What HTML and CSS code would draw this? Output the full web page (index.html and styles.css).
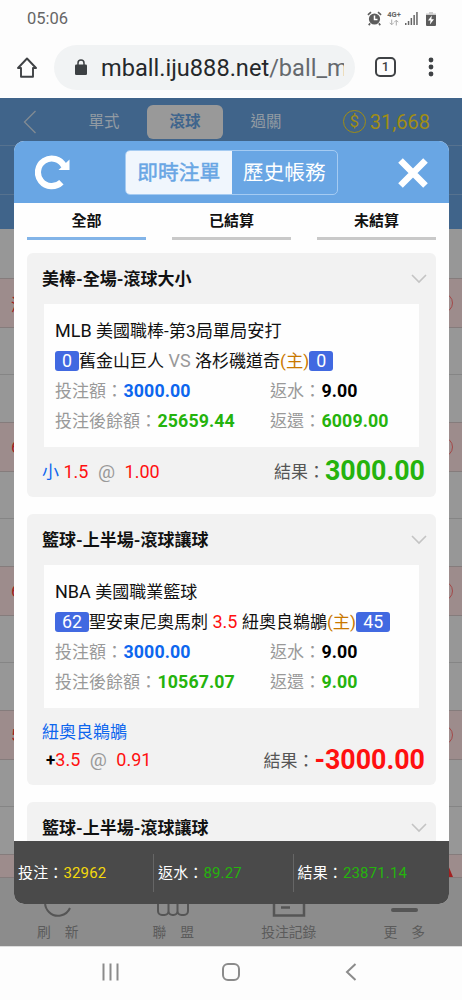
FILE: index.html
```html
<!DOCTYPE html>
<html lang="zh-TW">
<head>
<meta charset="utf-8">
<meta name="viewport" content="width=device-width">
<title>即時注單</title>
<link rel="stylesheet" href="styles.css">
</head>
<body>
<div class="phone">
  <header class="status">
    <span class="clock">05:06</span>
    <div class="status-icons">
      <svg class="alarm" width="15" height="15" viewBox="0 0 15 15" fill="none" stroke="#5c5c5c"><circle cx="7.5" cy="8" r="5.600" fill="#5c5c5c" stroke="none"/><path d="M7.500 4.500v4h3" stroke="#fff" stroke-width="1.500"/><path d="M.9 3.900 4 1.200M14.100 3.900 11 1.200M3.200 12.400l-1.500 1.700M11.800 12.400l1.500 1.700" stroke-width="1.600"/></svg>
      <div class="net"><span class="net-type">4G+</span>
        <svg width="10" height="7" viewBox="0 0 10 7" fill="none" stroke="#aaa"><path d="M2.700.5v5M.7 3.800l2 2 2-2M7.300 6.500v-5M5.300 3.200l2-2 2 2"/></svg>
      </div>
      <svg class="signal" width="13" height="13" viewBox="0 0 13 13" fill="#666"><path d="M0 11h1.500v2H0zM2.800 9h1.500v4H2.800zM5.600 6h1.500v7H5.600zM8.400 3h1.500v10H8.400zM11.200 0h1.500v13h-1.500z"/></svg>
      <svg class="battery" width="10" height="14" viewBox="0 0 10 14"><path fill="#ccc" d="M3 0h4v1.500h3v3H0v-3h3z"/><path fill="#5c5c5c" d="M0 3h10v10a1 1 0 0 1-1 1H1a1 1 0 0 1-1-1z"/><path fill="#fff" d="M5.800 3.500 2 8.500h2.500l-.6 4L8 7.300H5.400z"/></svg>
    </div>
  </header>
  <div class="browser">
    <svg class="home" width="20" height="21" viewBox="0 0 20 21" fill="none" stroke="#3f4245" stroke-width="1.900" stroke-linejoin="round"><path d="M1 11 10 1.500 19 11h-3v8.800H4V11z"/></svg>
    <div class="url">
      <svg width="12" height="16" viewBox="0 0 12 16"><rect y="5.500" width="12" height="10.500" rx="1.300" fill="#3c4043"/><path d="M3 6V3.900a3 3 0 0 1 6 0V6" fill="none" stroke="#3c4043" stroke-width="1.500"/></svg>
      <div class="address">mball.iju888.net<span class="path">/ball_m</span></div>
    </div>
    <div class="tab-count">1</div>
    <svg class="dots" width="6" height="20" viewBox="0 0 6 20" fill="#3f4245"><circle cx="3" cy="3" r="2.400"/><circle cx="3" cy="10" r="2.400"/><circle cx="3" cy="17" r="2.400"/></svg>
  </div>

  <main class="app">
    <div class="top">
      <svg class="back" width="14" height="24" viewBox="0 0 14 24" fill="none" stroke="#828b93" stroke-width="1.300"><path d="M12.500 1 1.500 12l11 11"/></svg>
      <span class="mode">單式</span>
      <span class="mode mode-on">滾球</span>
      <span class="mode">過關</span>
      <div class="balance"><span class="coin">$</span>31,668</div>
    </div>
    <div class="bar"></div>
    <div class="bar bar-last"></div>
    <div class="rows">
      <div class="gray first"></div>
      <div class="pink"><span>滾</span><i></i></div><div class="gray split"></div><div class="gray"></div>
      <div class="pink"><span>6</span><i></i></div><div class="gray split"></div><div class="gray"></div>
      <div class="pink"><span>6</span><i></i></div><div class="gray split"></div><div class="gray"></div>
      <div class="pink"><span>5</span><i></i></div><div class="gray split"></div><div class="gray"></div>
      <div class="pink cut"><svg width="9" height="12" viewBox="0 0 9 12"><path d="M0 0h4l5 12H0z" fill="#a32020"/></svg></div>
    </div>
    <nav class="menu">
      <div class="menu-item"><svg width="30" height="30" viewBox="0 0 30 30" fill="none" stroke="#555" stroke-width="2"><path d="M27 21A13 13 0 1 1 28 14"/></svg>刷　新</div>
      <div class="menu-item"><svg width="34" height="30" viewBox="0 0 34 30" fill="none" stroke="#555" stroke-width="2"><path d="M2 0v24a4 4 0 0 0 4 4h2.500a4 4 0 0 0 4-4V0v24a4 4 0 0 0 4 4h1a4 4 0 0 0 4-4V0v24a4 4 0 0 0 4 4H28a4 4 0 0 0 4-4V0"/></svg>聯　盟</div>
      <div class="menu-item"><svg width="34" height="32" viewBox="0 0 34 32" fill="none" stroke="#555" stroke-width="2.500"><path d="M2 0v30.500h30V0M9 22.500h9"/></svg>投注記錄</div>
      <div class="menu-item"><svg width="30" height="30" viewBox="0 0 30 30" fill="none" stroke="#555" stroke-width="4" stroke-linecap="round"><path d="M4 23h23"/></svg>更　多</div>
    </nav>

    <section class="modal">
      <div class="modal-head">
        <svg class="reload" width="36" height="36" viewBox="0 0 36 36"><path d="M26.400 27.200A13.800 13.800 0 1 1 29 11" fill="none" stroke="#fff" stroke-width="6.200"/><path d="M34.500 4.500V15H23.500z" fill="#fff"/></svg>
        <div class="segment"><span class="seg seg-on">即時注單</span><span class="seg">歷史帳務</span></div>
        <svg class="close" width="30" height="30" viewBox="0 0 30 30" stroke="#fff" stroke-width="6.500"><path d="M2.500 2.500 27.500 27.500M27.500 2.500 2.500 27.500"/></svg>
      </div>
      <div class="filters"><span class="filter filter-on">全部</span><span class="filter">已結算</span><span class="filter">未結算</span></div>
      <div class="list">
        <article class="card">
          <h2 class="card-title">美棒-全場-滾球大小<svg class="chev" width="16" height="10" viewBox="0 0 16 10"><path d="m1 1 7 7 7-7"/></svg></h2>
          <div class="detail">
            <div><span class="latin">MLB </span>美國職棒-<span class="latin">第3局單局安打</span></div>
            <div class="teams"><b class="score">0</b>舊金山巨人<span class="latin muted"> VS </span>洛杉磯道奇<span class="host">(主)</span><b class="score">0</b></div>
            <div class="pair"><span>投注額：<b class="blue">3000.00</b></span><span>返水：<b class="black">9.00</b></span></div>
            <div class="pair"><span>投注後餘額：<b class="green">25659.44</b></span><span>返還：<b class="green">6009.00</b></span></div>
          </div>
          <div class="outcome"><span><span class="blue">小</span><span class="latin red"> 1.5</span><span class="at">@</span><span class="latin red">1.00</span></span><span class="result">結果：<b class="green">3000.00</b></span></div>
        </article>
        <article class="card">
          <h2 class="card-title">籃球-上半場-滾球讓球<svg class="chev" width="16" height="10" viewBox="0 0 16 10"><path d="m1 1 7 7 7-7"/></svg></h2>
          <div class="detail">
            <div><span class="latin">NBA </span>美國職業籃球</div>
            <div class="teams"><b class="score">62</b>聖安東尼奧馬刺<span class="latin red"> 3.5 </span>紐奧良鵜鶘<span class="host">(主)</span><b class="score">45</b></div>
            <div class="pair"><span>投注額：<b class="blue">3000.00</b></span><span>返水：<b class="black">9.00</b></span></div>
            <div class="pair"><span>投注後餘額：<b class="green">10567.07</b></span><span>返還：<b class="green">9.00</b></span></div>
          </div>
          <div class="pick blue">紐奧良鵜鶘</div>
          <div class="outcome signed"><span class="odds"><b class="black">+</b><span class="latin red">3.5</span><span class="at">@</span><span class="latin red">0.91</span></span><span class="result">結果：<b class="red">-3000.00</b></span></div>
        </article>
        <article class="card">
          <h2 class="card-title">籃球-上半場-滾球讓球<svg class="chev" width="16" height="10" viewBox="0 0 16 10"><path d="m1 1 7 7 7-7"/></svg></h2>
        </article>
      </div>
      <footer class="totals">
        <div class="total">投注：<span class="yellow">32962</span></div>
        <div class="total">返水：<span class="green">89.27</span></div>
        <div class="total">結果：<span class="green">23871.14</span></div>
      </footer>
    </section>
  </main>

  <div class="sysnav">
    <svg width="17" height="18" viewBox="0 0 17 18" stroke="#8b8b8b" stroke-width="2"><path d="M1.500.5v17M8.500.5v17M15.500.5v17"/></svg>
    <svg width="20" height="20" viewBox="0 0 20 20" fill="none" stroke="#8b8b8b" stroke-width="2"><rect x="2" y="2" width="16" height="16" rx="5"/></svg>
    <svg class="sys-back" width="12" height="18" viewBox="0 0 12 18" fill="none" stroke="#8b8b8b" stroke-width="2"><path d="M10.500 1 2 9l8.500 8"/></svg>
  </div>
</div>
</body>
</html>
```
FILE: styles.css
```css
* { box-sizing: border-box; }
body { margin: 0; background: #fdfdfd; font-family: Roboto, "Noto Sans CJK TC", sans-serif; }
svg { display: block; flex: none; }
.phone { width: 462px; height: 1000px; display: flex; flex-direction: column; overflow: hidden; }

.status { height: 37px; flex: none; display: flex; align-items: center; justify-content: space-between; padding: 0 26px 0 27px; }
.clock { font-size: 16.5px; color: #666; }
.status-icons { display: flex; align-items: center; }
.net { width: 14px; margin: 0 4px 0 5px; display: flex; flex-direction: column; align-items: center; gap: 1px; }
.net-type { font-size: 7.5px; line-height: 7px; font-weight: 700; color: #666; }
.signal { margin-right: 8px; }

.browser { height: 61px; flex: none; display: flex; align-items: center; padding: 0 28px 0 17px; border-bottom: 1px solid #fff; }
.url { width: 301px; height: 45px; margin-left: 17px; padding: 0 11px 0 21px; border-radius: 23px; background: #f1f3f4; display: flex; align-items: center; gap: 14px; }
.address { flex: 1; min-width: 0; padding-top: 2px; overflow: hidden; white-space: nowrap; font-size: 23.6px; line-height: 32px; color: #25282b; }
.path { color: #65696d; }
.tab-count { width: 21px; height: 20px; margin-left: 20px; border: 2px solid #3f4245; border-radius: 5px; font-size: 13px; line-height: 16px; text-align: center; font-weight: 500; color: #3f4245; }
.dots { margin-left: auto; }

.app { height: 848px; flex: none; position: relative; background: #989898; }
.top { height: 48px; background: #40648a; border-bottom: 1px solid #56728f; display: flex; align-items: center; padding: 0 32px 0 23px; color: #929ba3; }
.mode { width: 76px; height: 34px; line-height: 35px; text-align: center; font-size: 15.5px; }
.back + .mode { margin-left: 29px; }
.mode-on { margin: 0 5px; background: #999; color: #3f658d; border-radius: 6px; font-weight: 700; }
.balance { margin-left: auto; display: flex; align-items: center; gap: 4px; font-size: 20px; color: #a08d14; }
.coin { width: 23px; height: 23px; border: 1.5px solid #a08d14; border-radius: 50%; font-size: 17px; line-height: 20px; text-align: center; }
.bar { height: 49px; background: #40648a; border-bottom: 1px solid #56728f; }
.bar-last { height: 34px; border-bottom: 0; }
.gray { height: 47px; background: #979797; border-bottom: 0; }
.split { border-bottom: 1px solid #858585; }
.first { height: 49px; }
.pink { height: 50px; display: flex; align-items: center; justify-content: space-between; padding: 0 9.5px 0 11px; background: #9d8c8c; border-top: 1px solid #857c7c; border-bottom: 1px solid #857c7c; color: #a32020; font-size: 17px; }
.pink i { width: 20px; height: 20px; border: 1.5px solid #a34848; border-radius: 50%; }
.cut { height: 24px; padding-right: 0; justify-content: flex-end; align-items: flex-end; }
.cut svg { margin-right: 9px; }
.menu { height: 68px; display: grid; grid-template-columns: repeat(4, 1fr); background: #8c8c8c; color: #5b5b5b; font-size: 13.8px; line-height: 20px; }
.menu-item { display: flex; flex-direction: column; align-items: center; justify-content: flex-end; gap: 5px; padding-bottom: 4px; }

.modal { position: absolute; left: 14px; top: 43px; width: 435px; height: 763px; background: #fefefe; border-radius: 10px; overflow: hidden; display: flex; flex-direction: column; }
.modal-head { height: 62px; flex: none; display: flex; align-items: center; padding: 1px 21px 0; background: #69a6e4; }
.segment { width: 213px; height: 45px; margin-left: 54px; display: flex; border: 1px solid #a5cbf2; border-radius: 5px; overflow: hidden; }
.seg { flex: 1; text-align: center; font-size: 20.7px; line-height: 44px; color: #fff; }
.seg-on { background: #f0f6fd; color: #69a6e4; -webkit-text-stroke: .5px #69a6e4; }
.close { margin-left: auto; }
.filters { height: 38px; flex: none; display: flex; justify-content: space-between; padding: 0 13px; }
.filter { width: 119px; height: 37px; border-bottom: 3px solid #c9c9c9; text-align: center; font-size: 15px; line-height: 37px; font-weight: 700; color: #111; }
.filter-on { border-color: #82b4e8; }
.list { flex: 1; min-height: 0; overflow: hidden; padding: 12px 13px 0; display: flex; flex-direction: column; gap: 17px; }
.card { flex: none; background: #f2f2f2; border-radius: 6px; padding: 0 11px 0 15px; font-size: 17px; }
.card-title { height: 51px; margin: 0; padding-bottom: 2px; display: flex; align-items: center; justify-content: space-between; font-size: 17px; font-weight: 700; color: #111; }
.chev { margin: 3px -2px 0 0; fill: none; stroke: #c4c4c4; stroke-width: 1.6; }
.detail { margin: 0 6px 0 2px; height: 143px; padding: 12px 0 0 11px; background: #fefefe; line-height: 30px; white-space: nowrap; color: #111; }
.detail > div { height: 30px; }
.latin { font-size: 18px; white-space: pre; }
.detail > div:first-child .latin + .latin { font-size: 17.2px; }
.teams { display: flex; align-items: center; white-space: pre; }
.score { height: 20px; padding: 0 7px; background: #4169e1; color: #fff; border-radius: 3px; font-size: 17.8px; font-weight: 400; line-height: 20px; }
.host { font-size: 17.3px; color: #c97800; }
.pair { display: grid; grid-template-columns: 215px 1fr; color: #999; }
.pair b { font-size: 17.8px; letter-spacing: .1px; margin-left: .5px; }
.outcome { height: 50px; display: flex; align-items: center; justify-content: space-between; padding-bottom: 3px; color: #555; }
.at { margin: 0 9.5px; font-size: 19px; line-height: 20px; color: #999; }
.result { display: flex; align-items: center; }
.result b { font-size: 26.8px; line-height: 46px; }
.pick { height: 46px; line-height: 48px; }
.signed { height: 31px; padding-bottom: 20px; }
.odds { padding-left: 4px; }
.muted { color: #999; }
.blue { color: #0d66ee; }
.black { color: #000; }
.green { color: #25b30d; }
.red { color: #ff1010; }
.yellow { color: #f5d90c; }

.totals { height: 63px; flex: none; display: grid; grid-template-columns: 139px 139.500px 1fr; align-items: center; background: #4a4a4a; color: #fff; font-size: 15px; letter-spacing: .15px; }
.total { height: 38px; line-height: 38px; padding-left: 4px; white-space: nowrap; }
.total + .total { border-left: 1px solid #666; }

.sysnav { flex: 1; display: flex; align-items: center; justify-content: center; gap: 102px; padding: 0 3px 3px 0; border-top: 1px solid #ddd; background: #fdfdfd; }
.sys-back { margin-left: 2px; }
```
